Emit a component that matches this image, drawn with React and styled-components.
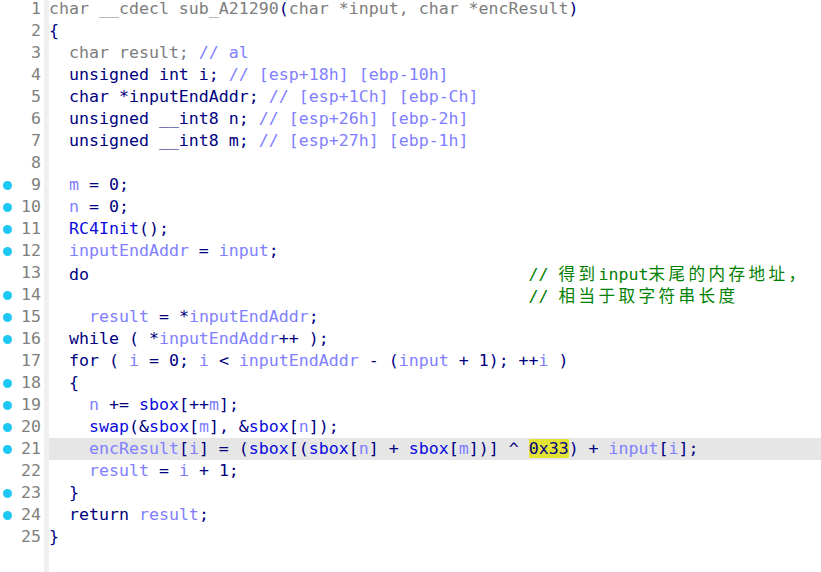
import React from 'react';
import styled, { createGlobalStyle } from 'styled-components';

const Global = createGlobalStyle`
  html, body {
    margin: 0;
    padding: 0;
    background: #ffffff;
  }
`;

const colors = {
  k: '#000080',
  v: '#8080ff',
  g: '#0a0ae0',
  c: '#008000',
  z: '#008000',
  d: '#7d7d7d',
  a: '#8080ff',
  n: '#000080',
};

const Editor = styled.div`
  display: flex;
  height: 100vh;
  overflow: hidden;
  font-family: "DejaVu Sans Mono", "Noto Sans CJK SC", monospace;
  font-size: 16.6px;
  line-height: 22px;
  background: #ffffff;
`;

const Gutter = styled.div`
  width: 44px;
  flex-shrink: 0;
  margin-top: -2px;
`;

const Separator = styled.div`
  width: 5px;
  flex-shrink: 0;
  background: #f0f0f0;
`;

const GutterRow = styled.div`
  height: 22px;
  display: flex;
  align-items: center;
`;

const Dot = styled.span`
  width: 14px;
  display: flex;
  justify-content: center;
  &::before {
    content: '';
    display: ${p => (p.$on ? 'block' : 'none')};
    width: 9px;
    height: 9px;
    border-radius: 50%;
    background: #1ec8f5;
  }
`;

const LineNo = styled.span`
  flex: 1;
  text-align: right;
  padding-right: 3px;
  color: #7f7f7f;
`;

const Code = styled.div`
  flex: 1;
  margin-top: -2px;
`;

const Line = styled.div`
  height: 22px;
  white-space: pre;
  background: ${p => (p.$current ? '#e6e6e6' : 'transparent')};
`;

const Tok = styled.span`
  color: ${p => colors[p.$t]};
  background: ${p => (p.$t === 'n' ? '#e3e336' : 'transparent')};
  letter-spacing: ${p => (p.$t === 'z' ? '3.4px' : '0')};
  font-family: ${p => (p.$t === 'z' ? '"Noto Sans CJK SC", sans-serif' : 'inherit')};
`;

const pad = ' '.repeat(44);

const lines = [
  [['d', 'char __cdecl sub_A21290'], ['k', '('], ['d', 'char *input, char *encResult'], ['k', ')']],
  [['k', '{']],
  [['d', '  char result; '], ['a', '// al']],
  [['k', '  unsigned int i; '], ['a', '// [esp+18h] [ebp-10h]']],
  [['k', '  char *inputEndAddr; '], ['a', '// [esp+1Ch] [ebp-Ch]']],
  [['k', '  unsigned __int8 n; '], ['a', '// [esp+26h] [ebp-2h]']],
  [['k', '  unsigned __int8 m; '], ['a', '// [esp+27h] [ebp-1h]']],
  [],
  [['k', '  '], ['v', 'm'], ['k', ' = 0;']],
  [['k', '  '], ['v', 'n'], ['k', ' = 0;']],
  [['k', '  '], ['g', 'RC4Init'], ['k', '();']],
  [['k', '  '], ['v', 'inputEndAddr'], ['k', ' = '], ['v', 'input'], ['k', ';']],
  [['k', '  do' + pad], ['c', '// '], ['z', '得到'], ['c', 'input'], ['z', '末尾的内存地址，']],
  [['k', '    ' + pad], ['c', '// '], ['z', '相当于取字符串长度']],
  [['k', '    '], ['v', 'result'], ['k', ' = *'], ['v', 'inputEndAddr'], ['k', ';']],
  [['k', '  while ( *'], ['v', 'inputEndAddr'], ['k', '++ );']],
  [['k', '  for ( '], ['v', 'i'], ['k', ' = 0; '], ['v', 'i'], ['k', ' < '], ['v', 'inputEndAddr'], ['k', ' - ('], ['v', 'input'], ['k', ' + 1); ++'], ['v', 'i'], ['k', ' )']],
  [['k', '  {']],
  [['k', '    '], ['v', 'n'], ['k', ' += '], ['g', 'sbox'], ['k', '[++'], ['v', 'm'], ['k', '];']],
  [['k', '    '], ['g', 'swap'], ['k', '(&'], ['g', 'sbox'], ['k', '['], ['v', 'm'], ['k', '], &'], ['g', 'sbox'], ['k', '['], ['v', 'n'], ['k', ']);']],
  [['k', '    '], ['v', 'encResult'], ['k', '['], ['v', 'i'], ['k', '] = ('], ['g', 'sbox'], ['k', '[('], ['g', 'sbox'], ['k', '['], ['v', 'n'], ['k', '] + '], ['g', 'sbox'], ['k', '['], ['v', 'm'], ['k', '])] ^ '], ['n', '0x33'], ['k', ') + '], ['v', 'input'], ['k', '['], ['v', 'i'], ['k', '];']],
  [['k', '    '], ['v', 'result'], ['k', ' = '], ['v', 'i'], ['k', ' + 1;']],
  [['k', '  }']],
  [['k', '  return '], ['v', 'result'], ['k', ';']],
  [['k', '}']],
];

const breakpoints = [9, 10, 11, 12, 14, 15, 16, 18, 19, 20, 21, 23, 24];
const currentLine = 21;

export default function App() {
  return (
    <>
      <Global />
      <Editor>
        <Gutter>
          {lines.map((_, i) => (
            <GutterRow key={i}>
              <Dot $on={breakpoints.includes(i + 1)} />
              <LineNo>{i + 1}</LineNo>
            </GutterRow>
          ))}
        </Gutter>
        <Separator />
        <Code>
          {lines.map((segs, i) => (
            <Line key={i} $current={i + 1 === currentLine}>
              {segs.map(([t, text], j) => (
                <Tok key={j} $t={t}>{text}</Tok>
              ))}
            </Line>
          ))}
        </Code>
      </Editor>
    </>
  );
}
